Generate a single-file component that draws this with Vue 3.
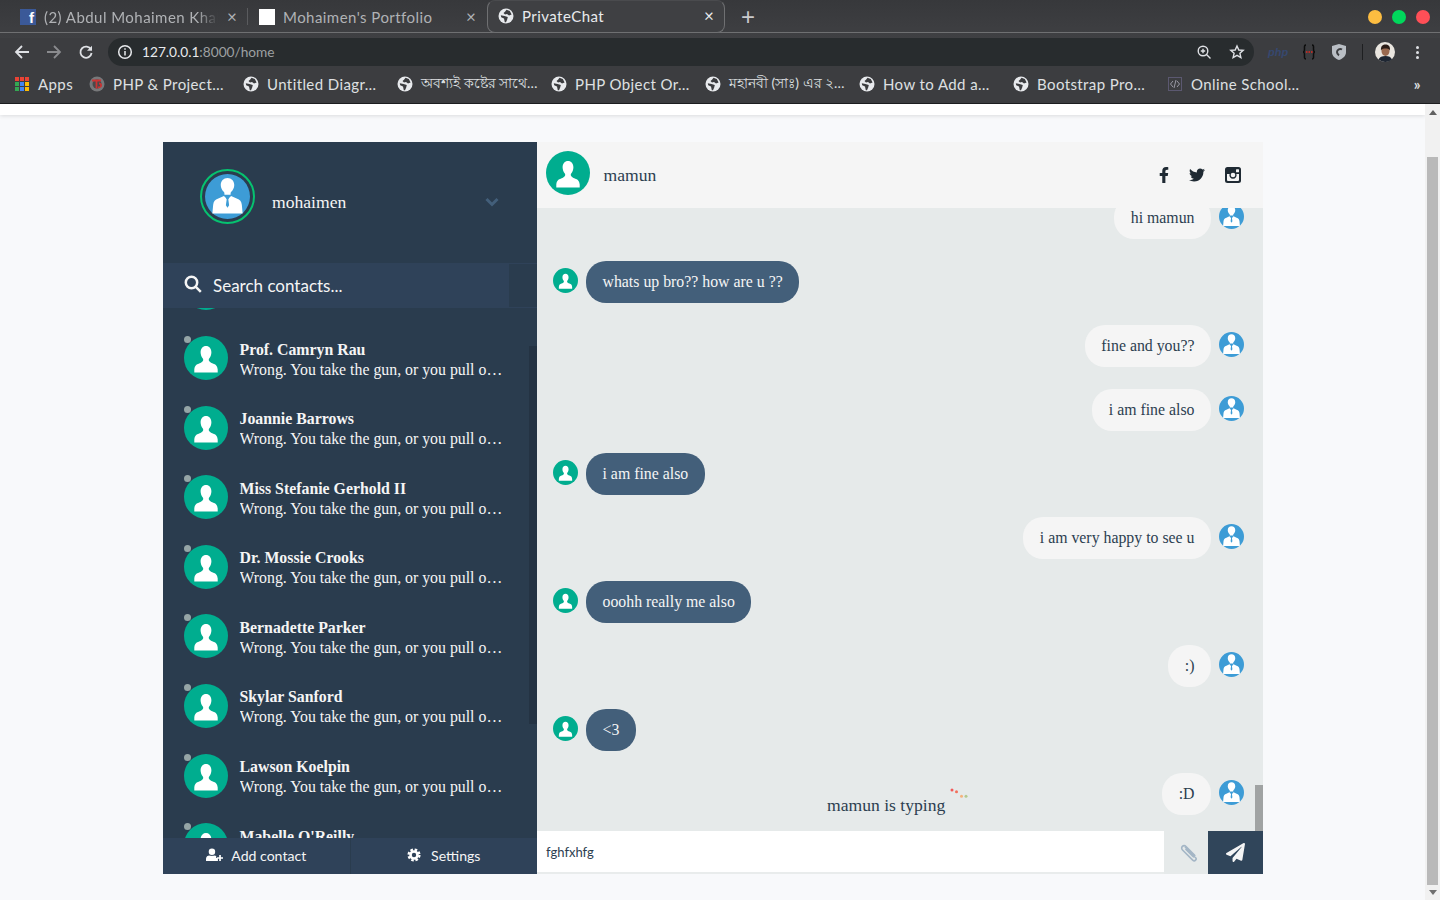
<script setup>
const bookmarks = [
  { icon: 'php', text: 'PHP & Project…' },
  { icon: 'globe', text: 'Untitled Diagr…' },
  { icon: 'globe', text: 'অবশ্যই কষ্টের সাথে…', bn: true },
  { icon: 'globe', text: 'PHP Object Or…' },
  { icon: 'globe', text: 'মহানবী (সাঃ) এর ২…', bn: true },
  { icon: 'globe', text: 'How to Add a…' },
  { icon: 'globe', text: 'Bootstrap Pro…' },
  { icon: 'school', text: 'Online School…' }
]

const appColors = ['#ea4335', '#ea4335', '#ea4335', '#34a853', '#4285f4', '#fbbc05', '#34a853', '#4285f4', '#fbbc05']

const preview = 'Wrong. You take the gun, or you pull out a bigger one. Or, you call their bluff.'
const contacts = [
  '',
  'Prof. Camryn Rau',
  'Joannie Barrows',
  'Miss Stefanie Gerhold II',
  'Dr. Mossie Crooks',
  'Bernadette Parker',
  'Skylar Sanford',
  'Lawson Koelpin',
  "Mabelle O'Reilly"
]

const messages = [
  { from: 'me', text: 'hi mamun' },
  { from: 'them', text: 'whats up bro?? how are u ??' },
  { from: 'me', text: 'fine and you??' },
  { from: 'me', text: 'i am fine also' },
  { from: 'them', text: 'i am fine also' },
  { from: 'me', text: 'i am very happy to see u' },
  { from: 'them', text: 'ooohh really me also' },
  { from: 'me', text: ':)' },
  { from: 'them', text: '<3' },
  { from: 'me', text: ':D' }
]
</script>

<template>
  <div class="window">
    <svg class="defs" width="0" height="0">
      <symbol id="person" viewBox="0 0 44 44">
        <circle cx="22" cy="22" r="22" fill="#00ad8f" />
        <path fill="#fff" d="M22 10c-3.200 0-5.400 2.600-5.400 6.200 0 2.600.9 4.800 2.200 6.200.5.600.5 1.500.2 2.300-.5 1.300-2 2-3.900 2.700-2.800 1-4.400 2.100-4.800 6.100v3.100h23.400v-3.100c-.4-4-2-5.100-4.800-6.100-1.900-.7-3.400-1.400-3.900-2.700-.3-.8-.3-1.700.2-2.300 1.300-1.400 2.200-3.600 2.200-6.200C27.400 12.600 25.200 10 22 10z" />
      </symbol>
      <symbol id="suit" viewBox="0 0 44 44">
        <circle cx="22" cy="22" r="22" fill="#3d9cd6" />
        <path fill="#fff" d="M22 4c-3.900 0-6.600 3-6.600 6.800 0 2.600 1.200 5 2.900 6.600.5.500.7 1.100.7 1.800v1.200h6v-1.200c0-.7.200-1.300.7-1.800 1.700-1.600 2.900-4 2.900-6.600C28.600 7 25.900 4 22 4z" />
        <path fill="#fff" d="M18.500 21.500 13 24c-3.300 1.300-4.600 2.800-5 6l-.8 8.500h29.600L36 30c-.4-3.200-1.700-4.700-5-6l-5.500-2.500L22 25z" />
        <path fill="#3d9cd6" d="M20.400 23h3.200l-.8 2 .8 5.500-1.600 2.500-1.600-2.500.8-5.500z" />
      </symbol>
      <symbol id="globe" viewBox="0 0 16 16">
        <circle cx="8" cy="8" r="7.500" fill="#e8eaed" />
        <path fill="#3b3c3f" d="M8.500 1.800 11.800 3l1.800 3.500L11 7.500 9 6 7 6.500 5.500 5 7 3.800zM2.800 7.300 6.500 8l3.300 1-.6 2.500L8 14.200H6.800L6 10.500 3.200 9.200z" />
      </symbol>
    </svg>

    <header class="browser">
      <div class="tabstrip">
        <div class="tab first">
          <span class="fb-icon">f</span>
          <span class="tab-title faded">(2) Abdul Mohaimen Khalid</span>
          <span class="tab-x">×</span>
        </div>
        <div class="tab second">
          <span class="blank-icon"></span>
          <span class="tab-title">Mohaimen's Portfolio</span>
          <span class="tab-x">×</span>
        </div>
        <div class="tab active">
          <svg class="fav"><use href="#globe" /></svg>
          <span class="tab-title">PrivateChat</span>
          <span class="tab-x">×</span>
        </div>
        <span class="new-tab">+</span>
        <div class="traffic">
          <i class="dot yellow"></i>
          <i class="dot green"></i>
          <i class="dot red"></i>
        </div>
      </div>

      <div class="toolbar">
        <svg class="nav" viewBox="0 0 16 16"><path d="M15 8H2M8 2 2 8l6 6" /></svg>
        <svg class="nav dim" viewBox="0 0 16 16"><path d="M1 8h13M8 2l6 6-6 6" /></svg>
        <svg class="nav" viewBox="0 0 16 16"><path d="M13 5.500A5.600 5.600 0 1 0 13.600 9" /><path class="solid" d="M14 1.800v5h-5z" /></svg>
        <div class="omnibox">
          <svg class="info" viewBox="0 0 16 16">
            <circle cx="8" cy="8" r="6.300" />
            <path d="M8 7v4.500M8 4.300v1.500" />
          </svg>
          <span class="url"><b>127.0.0.1</b>:8000/home</span>
          <svg class="omni-icon" viewBox="0 0 16 16">
            <circle cx="7" cy="7" r="4.800" />
            <path d="M10.500 10.500 14.500 14.500M7 4.800v4.400M4.800 7h4.400" />
          </svg>
          <svg class="omni-icon star" viewBox="0 0 16 16">
            <path d="m8 2 1.800 4 4.400.4-3.300 2.900 1 4.300L8 11.300l-3.900 2.300 1-4.300-3.300-2.900L6.200 6z" />
          </svg>
        </div>
        <span class="ext-php">php</span>
        <svg class="ext-braces" viewBox="0 0 14 16">
          <path fill="none" stroke="#0d0d0d" stroke-width="1.500" d="M4 1C2 1 2.500 3 2.500 5S2 8 1 8c1 0 1.500 1 1.500 3S2 15 4 15M10 1c2 0 1.500 2 1.500 4s.5 3 1.500 3c-1 0-1.500 1-1.500 3s.5 4-1.500 4" />
          <path fill="none" stroke="#e0261c" stroke-width="1.500" stroke-dasharray="1.500 1" d="M4 8h7" />
        </svg>
        <svg class="ext-shield" viewBox="0 0 14 16">
          <path fill="#b9bec4" d="M7 0 14 2v6c0 4-3 6.500-7 8-4-1.500-7-4-7-8V2z" />
          <path fill="none" stroke="#3c3d40" stroke-width="2" d="M10 5.500A3.200 3.200 0 0 0 5 8c0 1.500.7 2.500 2 3.300" />
        </svg>
        <i class="sep"></i>
        <svg class="profile-pic" viewBox="0 0 20 20">
          <circle cx="10" cy="10" r="10" fill="#e9e5df" />
          <ellipse cx="10.500" cy="9" rx="4" ry="5" fill="#9a6a50" />
          <path fill="#2a1c16" d="M6 8.500C5.500 4 8 2.500 10.500 2.500S15.500 4 15 8.500C14 6.500 12 6.500 10.500 6.500S7 6.500 6 8.500z" />
          <path fill="#1f2733" d="M3.500 17.500c1-2.500 3.500-3.500 7-3.500s5.500 1 6.500 3.500A10 10 0 0 1 10 20a10 10 0 0 1-6.500-2.500z" />
        </svg>
        <span class="kebab"><i></i><i></i><i></i></span>
      </div>

      <div class="bookmarks">
        <div class="apps">
          <span class="apps-grid">
            <i v-for="(c, i) in appColors" :key="i" :style="{ background: c }"></i>
          </span>
          <span>Apps</span>
        </div>
        <div v-for="b in bookmarks" :key="b.text" class="bookmark">
          <svg v-if="b.icon === 'globe'" class="fav"><use href="#globe" /></svg>
          <svg v-else-if="b.icon === 'php'" class="fav" viewBox="0 0 16 16">
            <circle cx="8" cy="8" r="7.500" fill="#77787a" />
            <circle cx="8" cy="8" r="4.500" fill="#4a4a4c" />
            <path fill="none" stroke="#c33" stroke-width="1.800" d="M3 4.500h9M7.500 4.500v8M10 7.500c3 0 3 4-1 4" />
          </svg>
          <svg v-else class="fav" viewBox="0 0 16 16">
            <rect x="1.500" y="1.500" width="13" height="13" fill="none" stroke="#5b5870" />
            <path fill="none" stroke="#9a9aa5" d="M6 5 3.500 8 6 11M10 5l2.500 3-2.500 3M9 4 7 12" />
          </svg>
          <span class="bookmark-text" :class="{ bn: b.bn }">{{ b.text }}</span>
        </div>
        <span class="more">»</span>
      </div>
    </header>

    <div class="viewport">
      <main class="page">
        <div class="page-top"></div>
        <div class="frame">
          <aside class="sidepanel">
            <div class="profile">
              <span class="profile-ring">
                <svg class="profile-avatar"><use href="#suit" /></svg>
              </span>
              <span class="profile-name">mohaimen</span>
              <svg class="chevron" viewBox="0 0 14 10"><path d="m1.500 2 5.500 5.500L12.500 2" /></svg>
            </div>

            <div class="search">
              <div class="search-box">
                <svg class="search-icon" viewBox="0 0 18 18">
                  <circle cx="7.500" cy="7.500" r="5.700" />
                  <path d="m11.800 11.800 5 5" />
                </svg>
                <span>Search contacts...</span>
              </div>
            </div>

            <div class="contacts">
              <ul class="contact-list">
                <li v-for="c in contacts" :key="c" class="contact">
                  <span class="contact-pic">
                    <i class="status"></i>
                    <svg class="contact-avatar"><use href="#person" /></svg>
                  </span>
                  <div class="contact-meta">
                    <p class="contact-name">{{ c }}</p>
                    <p v-if="c" class="contact-preview">{{ preview }}</p>
                  </div>
                </li>
              </ul>
              <i class="list-thumb"></i>
            </div>

            <div class="bottom-bar">
              <button class="bottom-btn">
                <svg class="add-icon" viewBox="0 0 20 16">
                  <circle cx="7" cy="4.200" r="3.800" fill="#fff" />
                  <path fill="#fff" d="M0 15v-2.500C0 10 2 8.600 4 8.600c1 .6 5 .6 6 0 .7 0 1.500.2 2 .6v2.300h2V15z" />
                  <path fill="#fff" d="M15.500 8h2v2.500H20v2h-2.500V15h-2v-2.500H13v-2h2.500z" />
                </svg>
                <span>Add contact</span>
              </button>
              <button class="bottom-btn">
                <svg class="cog-icon" viewBox="0 0 16 16">
                  <circle cx="8" cy="8" r="4" fill="none" stroke="#fff" stroke-width="3" />
                  <circle cx="8" cy="8" r="6.200" fill="none" stroke="#fff" stroke-width="2.600" stroke-dasharray="2.900 1.970" />
                </svg>
                <span>Settings</span>
              </button>
            </div>
          </aside>

          <section class="chat">
            <div class="chat-head">
              <svg class="chat-avatar"><use href="#person" /></svg>
              <span class="chat-name">mamun</span>
              <div class="social">
                <svg class="fb" viewBox="0 0 320 512"><path d="M279.14 288l14.22-92.66h-88.91v-60.13c0-25.35 12.42-50.06 52.24-50.06h40.42V6.26S260.43 0 225.36 0c-73.22 0-121.08 44.38-121.08 124.72v70.62H22.89V288h81.39v224h100.17V288z" /></svg>
                <svg class="tw" viewBox="0 0 512 512"><path d="M459.37 151.716c.325 4.548.325 9.097.325 13.645 0 138.72-105.583 298.558-298.558 298.558-59.452 0-114.68-17.219-161.137-47.106 8.447.974 16.568 1.299 25.34 1.299 49.055 0 94.213-16.568 130.274-44.832-46.132-.975-84.792-31.188-98.112-72.772 6.498.974 12.995 1.624 19.818 1.624 9.421 0 18.843-1.3 27.614-3.573-48.081-9.747-84.143-51.98-84.143-102.985v-1.299c13.969 7.797 30.214 12.67 47.431 13.319-28.264-18.843-46.781-51.005-46.781-87.391 0-19.492 5.197-37.36 14.294-52.954 51.655 63.675 129.3 105.258 216.365 109.807-1.624-7.797-2.599-15.918-2.599-24.04 0-57.828 46.782-104.934 104.934-104.934 30.213 0 57.502 12.67 76.67 33.137 23.715-4.548 46.456-13.32 66.599-25.34-7.798 24.366-24.366 44.833-46.132 57.827 21.117-2.273 41.584-8.122 60.426-16.243-14.292 20.791-32.161 39.308-52.628 54.253z" /></svg>
                <svg class="ig" viewBox="0 0 16 16">
                  <rect width="16" height="16" rx="2.500" fill="#1f2a33" />
                  <path fill="#f5f5f5" d="M2 7h2.600a3.600 3.600 0 1 0 6.800 0H14v6a1 1 0 0 1-1 1H3a1 1 0 0 1-1-1z" />
                  <circle cx="8" cy="8" r="2.300" fill="#f5f5f5" />
                  <rect x="11" y="2.200" width="3" height="3" rx=".5" fill="#f5f5f5" />
                </svg>
              </div>
            </div>

            <div class="messages">
              <div v-for="(m, i) in messages" :key="i" class="row" :class="m.from">
                <svg class="msg-avatar"><use :href="m.from === 'me' ? '#suit' : '#person'" /></svg>
                <p class="bubble">{{ m.text }}</p>
              </div>
              <i class="msg-thumb"></i>
              <div class="typing">
                <span>mamun is typing</span>
                <svg class="typing-dots" viewBox="0 0 18 10">
                  <circle cx="2" cy="2" r="1.500" fill="#f25a5a" />
                  <circle cx="6.500" cy="3.800" r="1.500" fill="#f2705a" />
                  <circle cx="11.500" cy="8.200" r="1.500" fill="#f5b27c" />
                  <circle cx="16" cy="8.200" r="1.500" fill="#b5c98f" />
                </svg>
              </div>
            </div>

            <div class="composer">
              <div class="composer-input">fghfxhfg</div>
              <div class="attach">
                <svg viewBox="0 0 20 20"><path d="M6 4 16.500 14.500c1.800 1.800-.7 4.500-2.800 2.600L3.500 7C1 4.500 4.500 1 7 3.500L15.500 12c1 1-.5 2.500-1.500 1.500L6.500 6" /></svg>
              </div>
              <button class="send">
                <svg viewBox="0 0 512 512"><path d="M476 3.2L12.5 270.600c-18.100 10.400-15.800 35.600 2.200 43.200L121 358.400l287.300-253.200c5.500-4.900 13.300 2.600 8.600 8.300L176 407v80.500c0 23.600 28.500 32.900 42.500 15.800L282 426l124.600 52.200c14.200 6 30.400-2.900 33-18.200l72-432C515 7.800 493.300-6.800 476 3.200z" /></svg>
              </button>
            </div>
          </section>
        </div>
      </main>

      <div class="scrollbar">
        <span class="arrow up"></span>
        <i class="scroll-thumb"></i>
        <span class="arrow down"></span>
      </div>
    </div>
  </div>
</template>

<style>
html, body {
  margin: 0;
  overflow: hidden;
}
</style>

<style scoped>
* {
  box-sizing: border-box;
}

p {
  margin: 0;
}

.defs {
  position: absolute;
}

.window {
  width: 1440px;
  height: 900px;
  display: flex;
  flex-direction: column;
  overflow: hidden;
  font-family: "Liberation Serif", serif;
}

/* browser chrome */

.browser {
  background: #3c3d40;
  color: #dfe0e2;
  font-family: Lato, "Noto Sans", sans-serif;
  border-bottom: 1px solid #1d1e20;
}

.tabstrip {
  height: 38px;
  display: flex;
  background: linear-gradient(#6f7072, #6f7072) no-repeat 0 32px / 100% 1px, linear-gradient(#37383b, #3f4043);
}

.tab {
  height: 33px;
  display: flex;
  align-items: center;
  font-size: 15px;
  color: #b0b2b5;
}

.tab.first {
  width: 247px;
  padding: 0 7px 0 20px;
}

.tab.first .tab-title {
  margin-right: 6px;
}

.tab.second {
  width: 240px;
  padding: 0 8px 0 11px;
  position: relative;
}

.tab.second::before {
  content: "";
  position: absolute;
  left: 0;
  top: 8px;
  height: 17px;
  width: 1px;
  background: #5a5b5e;
}

.tab.second .blank-icon {
  margin-left: 1px;
}

.tab.active {
  width: 238px;
  padding: 0 7px 2px 10px;
  color: #e8eaed;
  background: #3f4043;
  border: 1px solid #6f7072;
  border-top-color: #4a4b4e;
  border-radius: 8px;
}

.tab-title {
  flex: 1;
  white-space: nowrap;
  overflow: hidden;
  margin-left: 8px;
  letter-spacing: .45px;
}

.faded {
  -webkit-mask-image: linear-gradient(90deg, #000 88%, transparent);
  mask-image: linear-gradient(90deg, #000 88%, transparent);
}

.tab-x {
  width: 16px;
  font-size: 17px;
  text-align: center;
}

.fb-icon {
  width: 16px;
  height: 16px;
  flex-shrink: 0;
  background: #3b5998;
  color: #fff;
  font: bold 15px/18px "Liberation Sans", sans-serif;
  text-align: right;
  padding-right: 2px;
  overflow: hidden;
}

.blank-icon {
  width: 16px;
  height: 16px;
  flex-shrink: 0;
  background: #fff;
}

.fav {
  width: 16px;
  height: 16px;
  flex-shrink: 0;
}

.new-tab {
  margin-left: 15px;
  width: 16px;
  height: 33px;
  font: 300 24px/33px "Liberation Sans", sans-serif;
  color: #c9cacc;
  text-align: center;
}

.traffic {
  margin-left: auto;
  display: flex;
  gap: 10px;
  padding: 10px 10px 0 0;
}

.dot {
  width: 14px;
  height: 14px;
  border-radius: 50%;
}

.yellow { background: #fdbd41; }
.green { background: #00d85c; }
.red { background: #ff4f57; }

.toolbar {
  height: 28px;
  display: flex;
  align-items: center;
  padding-left: 14px;
}

.nav {
  width: 16px;
  height: 16px;
  margin-right: 16px;
  fill: none;
  stroke: #dfe1e5;
  stroke-width: 1.800;
}

.nav.dim {
  stroke: #8a8b8e;
}

.nav .solid {
  fill: #dfe1e5;
  stroke: none;
}

.omnibox {
  width: 1146px;
  margin-left: -2px;
  height: 28px;
  background: #282c2e;
  border-radius: 14px;
  display: flex;
  align-items: center;
  padding-left: 9px;
  padding-right: 9px;
}

.info {
  width: 16px;
  height: 16px;
  fill: none;
  stroke: #e8eaed;
  stroke-width: 1.500;
}

.url {
  margin-left: 9px;
  padding-bottom: 2px;
  font-size: 13.700px;
  color: #9da0a2;
  flex: 1;
}

.url b {
  font-weight: 400;
  color: #e8eaed;
}

.omni-icon {
  width: 16px;
  height: 16px;
  fill: none;
  stroke: #dfe1e5;
  stroke-width: 1.400;
}

.star {
  margin-left: 17px;
}

.ext-php {
  margin-left: 14px;
  font: italic 700 11px "Liberation Sans", sans-serif;
  color: #36486f;
  width: 18px;
}

.ext-braces {
  margin-left: 16px;
  width: 14px;
  height: 16px;
}

.ext-shield {
  margin-left: 16px;
  width: 14px;
  height: 16px;
}

.sep {
  width: 1px;
  height: 16px;
  background: #1e1f21;
  margin-left: 16px;
}

.profile-pic {
  width: 20px;
  height: 20px;
  margin-left: 12px;
}

.kebab {
  margin-left: 21px;
  display: flex;
  flex-direction: column;
  gap: 2px;
}

.kebab i {
  width: 3px;
  height: 3px;
  background: #dfe1e5;
  border-radius: 50%;
}

.bookmarks {
  height: 37px;
  display: flex;
  align-items: center;
  padding: 0 0 2px 15px;
  font-size: 15px;
  letter-spacing: .4px;
}

.apps {
  width: 74px;
  display: flex;
  align-items: center;
  gap: 9px;
}

.apps-grid {
  width: 14px;
  height: 14px;
  display: grid;
  grid-template-columns: repeat(3, 4px);
  gap: 1px;
}

.bookmark {
  width: 154px;
  display: flex;
  align-items: center;
  gap: 8px;
  white-space: nowrap;
}

.bookmark-text.bn {
  font-size: 13.900px;
  letter-spacing: 0;
}

.more {
  margin-left: auto;
  padding-right: 19px;
  font-size: 15px;
  font-weight: 700;
}

/* page */

.viewport {
  flex: 1;
  display: flex;
  min-height: 0;
}

.page {
  flex: 1;
  background: #f8f9fb;
  min-width: 0;
}

.page-top {
  height: 11px;
  background: #fff;
  box-shadow: 0 1px 4px rgba(0, 0, 0, .12);
}

.frame {
  width: 1100px;
  height: 732px;
  margin: 27px 0 0 163px;
  display: flex;
}

.scrollbar {
  width: 15px;
  background: #f1f1f1;
  display: flex;
  flex-direction: column;
  align-items: center;
  padding-top: 6px;
}

.scroll-thumb {
  width: 11px;
  height: 728px;
  margin-top: 42px;
  background: #b9b9b9;
}

.arrow {
  width: 0;
  height: 0;
  border-left: 4px solid transparent;
  border-right: 4px solid transparent;
}

.arrow.up {
  border-bottom: 5px solid #606060;
}

.arrow.down {
  margin-top: 5px;
  border-top: 5px solid #707070;
}

/* side panel */

.sidepanel {
  width: 374px;
  background: #2a3c4e;
  display: flex;
  flex-direction: column;
  color: #f5f5f5;
}

.profile {
  height: 121px;
  display: flex;
  align-items: flex-start;
  padding-left: 37px;
  padding-top: 27px;
}

.profile-ring {
  width: 55px;
  height: 55px;
  border: 2px solid #06c270;
  border-radius: 50%;
  padding: 3px;
  display: flex;
}

.profile-avatar {
  width: 45px;
  height: 45px;
}

.profile-name {
  margin-left: 17px;
  margin-top: 22px;
  font-size: 17.600px;
  line-height: 22px;
}

.chevron {
  width: 14px;
  height: 10px;
  margin-left: 139px;
  margin-top: 28px;
  fill: none;
  stroke: #435f7a;
  stroke-width: 3;
}

.search {
  height: 45px;
  border-top: 1px solid #2f4259;
  border-bottom: 1px solid #2f4259;
}

.search-box {
  width: 346px;
  height: 100%;
  background: #2f4259;
  display: flex;
  align-items: center;
  padding-left: 21px;
  gap: 11px;
  font: 17px Lato, sans-serif;
}

.search-icon {
  width: 18px;
  height: 18px;
  fill: none;
  stroke: #f5f5f5;
  stroke-width: 2.500;
  margin-top: -3px;
}

.contacts {
  flex: 1;
  min-height: 0;
  overflow: hidden;
  position: relative;
}

.contact-list {
  list-style: none;
  margin: -54.400px 0 0;
  padding: 0;
}

.contact {
  height: 69.600px;
  display: flex;
  align-items: center;
  padding-left: 21px;
}

.contact-pic {
  position: relative;
  width: 44px;
  height: 44px;
  flex-shrink: 0;
}

.contact-avatar {
  width: 44px;
  height: 44px;
  display: block;
}

.status {
  position: absolute;
  left: 0;
  top: 0;
  width: 7px;
  height: 7px;
  border-radius: 50%;
  background: #95a5a6;
}

.contact-meta {
  margin: 3px 0 0 11.500px;
  width: 263.500px;
  font-size: 15.840px;
  line-height: 20px;
}

.contact-name {
  font-weight: 700;
}

.contact-preview {
  white-space: nowrap;
  overflow: hidden;
  text-overflow: ellipsis;
}

.list-thumb {
  position: absolute;
  right: 0;
  top: 38px;
  width: 8px;
  height: 378px;
  background: #243343;
}

.bottom-bar {
  height: 36px;
  display: flex;
  background: #2f4259;
}

.bottom-btn {
  flex: 1;
  border: 0;
  background: transparent;
  color: #f5f5f5;
  font: 14.100px Lato, sans-serif;
  display: flex;
  align-items: center;
  justify-content: center;
  gap: 8px;
  padding: 0 0 2px;
}

.bottom-btn:first-child {
  border-right: 1px solid #2a3c4e;
}

.add-icon {
  width: 17px;
  height: 14px;
}

.cog-icon {
  width: 14px;
  height: 14px;
  margin-right: 2px;
}

/* chat */

.chat {
  flex: 1;
  display: flex;
  flex-direction: column;
  min-width: 0;
}

.chat-head {
  height: 66px;
  flex-shrink: 0;
  background: #f5f5f5;
  display: flex;
  align-items: center;
  padding: 0 22px 0 9px;
  color: #2c3e50;
}

.chat-avatar {
  width: 44px;
  height: 44px;
  margin-top: -4px;
}

.chat-name {
  margin-left: 13.500px;
  font-size: 17.600px;
}

.social {
  margin-left: auto;
  display: flex;
  align-items: center;
  gap: 20px;
}

.fb,
.tw {
  fill: #1f2a33;
  height: 16px;
}

.fb { width: 10px; }
.tw { width: 16px; }

.ig {
  width: 16px;
  height: 16px;
}

.messages {
  flex: 1;
  min-height: 0;
  background: #e6eaea;
  position: relative;
  overflow: hidden;
  display: flex;
  flex-direction: column;
  justify-content: flex-end;
  gap: 22px;
  padding: 0 19px 16px 16px;
}

.row {
  display: flex;
  align-items: flex-start;
  gap: 8px;
  flex-shrink: 0;
}

.row.me {
  flex-direction: row-reverse;
}

.msg-avatar {
  width: 25px;
  height: 25px;
  margin-top: 7px;
  flex-shrink: 0;
}

.bubble {
  padding: 10px 16.500px;
  border-radius: 20px;
  font-size: 15.840px;
  line-height: 22px;
  background: #435f7a;
  color: #f5f5f5;
}

.me .bubble {
  background: #f5f5f5;
  color: #2c3e50;
}

.msg-thumb {
  position: absolute;
  right: 0;
  bottom: 0;
  width: 8px;
  height: 46px;
  background: #a0a3a3;
}

.typing {
  position: absolute;
  left: 290px;
  bottom: 15px;
  display: flex;
  font-size: 17.600px;
  line-height: 22px;
  color: #2c3e50;
}

.typing-dots {
  width: 18px;
  height: 10px;
  margin: -6px 0 0 5px;
}

.composer {
  height: 43px;
  flex-shrink: 0;
  display: flex;
  background: #e9ecec;
}

.composer-input {
  flex: 1;
  height: 41px;
  background: #fff;
  padding-left: 9px;
  color: #2c3e50;
  font: 13px/43px Lato, sans-serif;
}

.attach {
  width: 44px;
  background: #e6eaea;
  display: flex;
  align-items: center;
  justify-content: center;
  padding-left: 5px;
}

.attach svg {
  width: 20px;
  height: 20px;
  fill: none;
  stroke: #a4b6c6;
  stroke-width: 1.600;
}

.send {
  width: 55px;
  border: 0;
  padding: 0;
  background: #30455a;
  display: flex;
  align-items: center;
  justify-content: center;
}

.send svg {
  width: 19px;
  height: 19px;
  fill: #f5f5f5;
}
</style>
